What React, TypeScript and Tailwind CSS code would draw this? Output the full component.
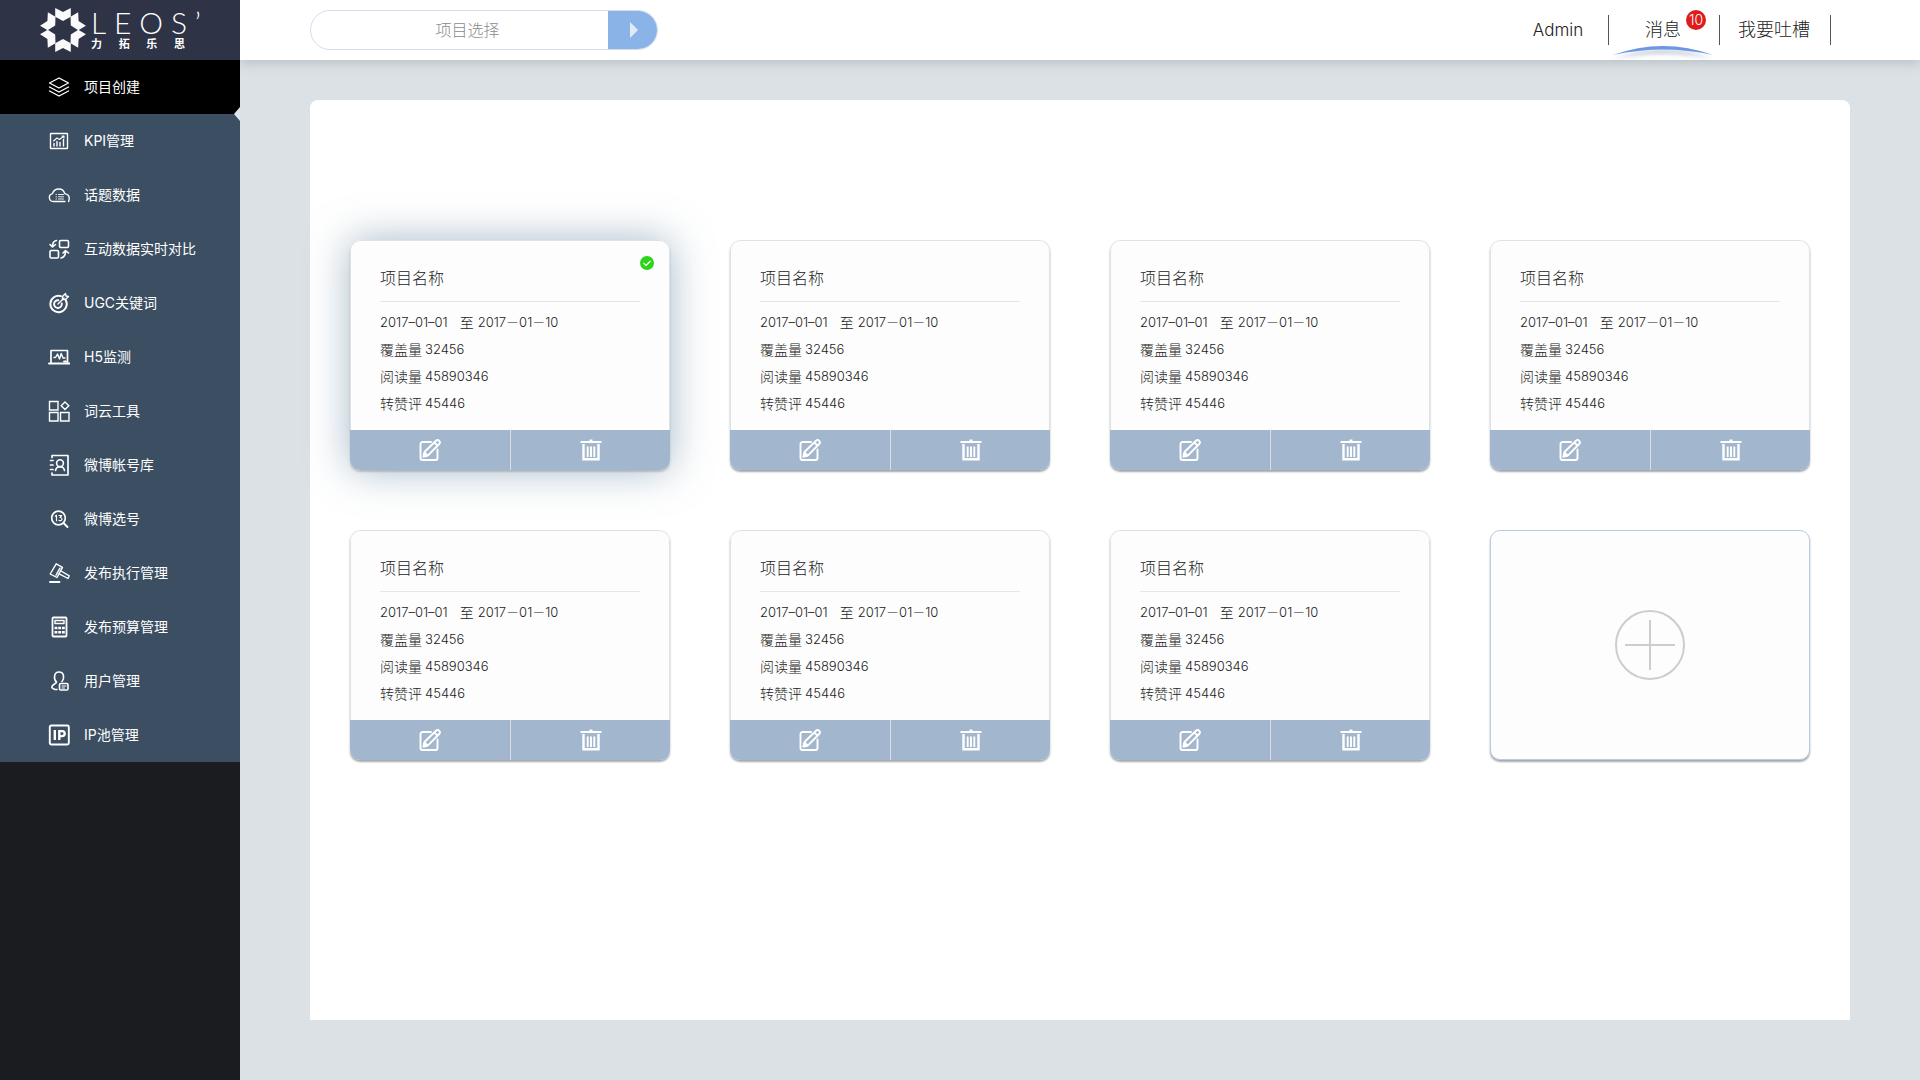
import { useState, type ReactNode } from "react";

const stroke = {
  fill: "none",
  stroke: "currentColor",
  strokeWidth: 1.4,
  strokeLinecap: "round",
  strokeLinejoin: "round",
} as const;

function Icon({ children }: { children: ReactNode }) {
  return (
    <svg viewBox="0 0 22 22" className="size-[22px] shrink-0" {...stroke} aria-hidden="true">
      {children}
    </svg>
  );
}

const icons = {
  layers: (
    <Icon>
      <path d="M11 2 20.5 7 11 12 1.500 7Z" />
      <path d="M1.500 11 11 16l9.500-5" />
      <path d="M1.500 15 11 20l9.500-5" />
    </Icon>
  ),
  kpi: (
    <Icon>
      <rect x="2.500" y="3.500" width="17" height="15" rx="0.500" />
      <path d="M6 16v-2.500M9 16v-4.500M12 16v-3.500M15.500 16V9.500" />
      <path d="m5.500 11 3.500-3 2.500 1.500L16 6M14 6h2v2" strokeWidth="1.100" />
    </Icon>
  ),
  cloud: (
    <Icon>
      <path d="M17 17.500H5.500A4 4 0 0 1 4.500 9.600C5.500 6.500 8 5 10.800 5c3 0 5.200 1.800 5.900 4.600 2.500.4 4.500 2.300 4.500 4.700 0 1.200-.2 2.300-.6 3.200" />
      <path d="M8 10.500h.5M10.500 10.500h5M8 12.800h.5M10.500 12.800h5M8 15h.5M10.500 15h5" strokeWidth="0.900" />
    </Icon>
  ),
  swap: (
    <Icon>
      <rect x="11.500" y="2.500" width="9" height="7" rx="1.200" strokeWidth="1.600" />
      <rect x="2" y="12.500" width="8.500" height="7.500" rx="1.200" strokeWidth="1.600" />
      <path strokeWidth="1.600" d="M8.500 2.500C5.500 3 4.500 5 4.500 8.500M2 6.500 4.500 9 7.500 6.500" />
      <path strokeWidth="1.600" d="M13 20c3-.500 4.500-3 4.500-7M15 15l2.500-2.500 3 2.500" />
    </Icon>
  ),
  target: (
    <Icon>
      <g strokeWidth="1.900">
        <path d="M17.800 8.200A8.200 8.200 0 1 1 13 4.200" />
        <path d="M13.800 11.500A3.900 3.900 0 1 1 10.300 8.200" />
      </g>
      <path d="m10 12 6-6M14.500 7.500V4.500L17.500 1.500 18 4l2.500.500-3 3Z" />
    </Icon>
  ),
  monitor: (
    <Icon>
      <path d="M3 16.500V4.500h16.500V16.500" strokeWidth="1.700" />
      <path d="M1 17.500h20.500" strokeWidth="2" />
      <path d="M6 11.500h1.500L9.500 8l2 5 1.700-5.500 1.800 4.500h2" />
      <path d="M16 15.500h2" strokeWidth="1.800" />
    </Icon>
  ),
  blocks: (
    <Icon>
      <path strokeLinejoin="miter" d="M1.500 1.500h8.500v8.500H1.500ZM1.500 12.500h8.500V21H1.500ZM12.500 12.500H21V21h-8.500ZM17 2l3.800 3.800L17 9.600l-3.800-3.800Z" />
    </Icon>
  ),
  contacts: (
    <Icon>
      <path strokeWidth="1.700" d="M4 3.500V1.500h16v19.500H4v-2M2.500 6.500H5M2.500 11H5M2.500 15.500H5" />
      <circle cx="12" cy="9.200" r="3.400" strokeWidth="1.600" />
      <path strokeWidth="1.600" d="M7.500 16.500c.5-2.500 2-3.800 4.500-3.800s4 1.300 4.500 3.800" />
    </Icon>
  ),
  search13: (
    <Icon>
      <circle cx="10.500" cy="10" r="6.800" strokeWidth="1.700" />
      <path d="m15.500 15 4 4" strokeWidth="2" />
      <path d="M7.300 8.200 8.500 7.300v5.400M11 7.500h2.700L12 9.500c1.300 0 2 .6 2 1.600 0 1.200-1.500 2-3 1.300" strokeWidth="1.200" />
    </Icon>
  ),
  gavel: (
    <Icon>
      <path d="M8.200 1.800 14.500 5.300 9 15.500 2.200 12Z" />
      <path d="m12 6.200-4 7" />
      <path d="m13 9 8.300 4.800-1.300 2.700-8.800-4.600" />
      <path d="M2 20h9.500" strokeWidth="1.900" />
    </Icon>
  ),
  calculator: (
    <Icon>
      <rect x="4.500" y="1.500" width="14" height="19" rx="1" strokeWidth="1.800" />
      <path d="M7 4.500h9v3H7Z" />
      <path strokeWidth="2.600" strokeLinecap="butt" d="M6.500 12h2.900M10.200 12h2.900M13.900 12h2.900M6.500 16.200h2.900M10.200 16.200h2.900M13.900 16.200h2.900" />
    </Icon>
  ),
  user: (
    <Icon>
      <path strokeWidth="1.600" d="M8.500 12.200C5.500 9.500 5.500 2 11 2s5.500 6.500 3 9.500M8.500 12.200c0 1.500-4.700 1.800-4.700 5C4.500 19 6.500 19.500 9 19.500" />
      <rect x="11.500" y="13.500" width="8.500" height="6.500" rx="1.300" strokeWidth="1.600" />
      <path strokeWidth="1.100" d="M14 16h4M14 18h2.500" />
    </Icon>
  ),
  ip: (
    <Icon>
      <rect x="1.800" y="1.500" width="19" height="19" rx="1.500" strokeWidth="1.900" />
      <path d="M6.800 6v10M11.300 16V7.100h2.900a2.400 2.400 0 0 1 0 5h-2.900" strokeWidth="2.400" strokeLinecap="butt" strokeLinejoin="miter" />
    </Icon>
  ),
};

const menu: { label: string; icon: ReactNode }[] = [
  { label: "项目创建", icon: icons.layers },
  { label: "KPI管理", icon: icons.kpi },
  { label: "话题数据", icon: icons.cloud },
  { label: "互动数据实时对比", icon: icons.swap },
  { label: "UGC关键词", icon: icons.target },
  { label: "H5监测", icon: icons.monitor },
  { label: "词云工具", icon: icons.blocks },
  { label: "微博帐号库", icon: icons.contacts },
  { label: "微博选号", icon: icons.search13 },
  { label: "发布执行管理", icon: icons.gavel },
  { label: "发布预算管理", icon: icons.calculator },
  { label: "用户管理", icon: icons.user },
  { label: "IP池管理", icon: icons.ip },
];

function Logo() {
  return (
    <div className="flex h-[60px] items-center gap-[5px] bg-[#2e3346] pl-10 text-white">
      <svg viewBox="0 0 46 46" className="size-[46px] shrink-0" fill="#fafafa" aria-hidden="true">
        {[0, 60, 120, 180, 240, 300].map((angle) => (
          <path key={angle} transform={`rotate(${angle} 23 23)`} d="M15.200 1 23 5 30.800 1V9.800L23 14 15.200 9.800Z" />
        ))}
      </svg>
      <div className="flex w-[110px] flex-col">
        <div className="flex justify-between font-['Lato'] text-[30px] leading-6 font-light">
          <span>L</span>
          <span>E</span>
          <span>O</span>
          <span>S</span>
          <span>’</span>
        </div>
        <div className="mt-1 flex w-[94px] justify-between text-[11px] leading-3 font-bold">
          <span>力</span>
          <span>拓</span>
          <span>乐</span>
          <span>思</span>
        </div>
      </div>
    </div>
  );
}

function Sidebar() {
  return (
    <aside className="relative z-20 w-60 shrink-0 bg-[#1b1c20]">
      <Logo />
      <nav className="bg-[#3b4e62]">
        {menu.map(({ label, icon }, i) => (
          <a
            key={label}
            href="#"
            aria-current={i === 0 ? "page" : undefined}
            className="relative flex h-[54px] items-center gap-3.5 pl-12 text-sm text-white aria-[current=page]:bg-black"
          >
            {icon}
            {label}
            {i === 0 && (
              <svg viewBox="0 0 6 14" className="absolute right-0 -bottom-[7px] z-10 h-3.5 w-1.5" fill="#dfe6ed" aria-hidden="true">
                <path d="M6 0v14L0 7Z" />
              </svg>
            )}
          </a>
        ))}
      </nav>
    </aside>
  );
}

function TopBar() {
  return (
    <header className="relative z-10 flex h-[60px] items-center justify-between bg-white pr-[89px] pl-[70px] shadow-[0_4px_10px_rgba(90,110,120,0.25)]">
      <form className="flex h-10 w-[348px] overflow-hidden rounded-full border border-[#d5dcec]" onSubmit={(e) => e.preventDefault()}>
        <input
          aria-label="项目选择"
          placeholder="项目选择"
          className="min-w-0 flex-1 pl-4 text-center text-base font-light outline-none placeholder:text-[#8a8a8a]"
        />
        <button type="submit" aria-label="选择" className="flex w-[49px] items-center justify-center bg-[#8ab4e8] pl-0.5">
          <svg viewBox="0 0 8 16" className="h-4 w-2" fill="#e3ebf1" aria-hidden="true">
            <path d="M0 0 8 8 0 16Z" />
          </svg>
        </button>
      </form>
      <nav className="flex h-[30px] text-lg font-light text-[#222]">
        <a href="#" className="flex w-[101px] items-center justify-center border-r border-[#555] text-[17px]">
          Admin
        </a>
        <a href="#" className="relative flex w-[111px] items-center justify-center border-r border-[#555] pr-0.5">
          消息
          <span className="absolute -top-[5px] right-[13px] flex size-5 items-center justify-center rounded-full bg-[#e01b1b] text-sm text-white">10</span>
          <svg viewBox="0 0 100 14" className="absolute top-[31px] left-1 h-3.5 w-[100px] drop-shadow-[0_4px_2px_rgba(80,100,140,0.4)]" fill="#6a98e4" aria-hidden="true">
            <path d="M0 9Q50-9 100 9 50-2 0 9Z" />
          </svg>
        </a>
        <a href="#" className="flex w-[111px] items-center justify-center border-r border-[#555] pr-0.5">
          我要吐槽
        </a>
      </nav>
    </header>
  );
}

type Project = {
  name: string;
  start: string;
  end: string;
  stats: [string, string][];
};

const project: Project = {
  name: "项目名称",
  start: "2017–01–01",
  end: "2017－01－10",
  stats: [
    ["覆盖量", "32456"],
    ["阅读量", "45890346"],
    ["转赞评", "45446"],
  ],
};

function EditIcon() {
  return (
    <svg viewBox="0 0 22 22" className="size-[22px]" {...stroke} strokeWidth={1.900} aria-hidden="true">
      <path d="M12 3H3.500A2 2 0 0 0 1.500 5v14A2 2 0 0 0 3.500 21h13a2 2 0 0 0 2-2v-8.500" />
      <path d="m4.500 17.500 1.200-4.800L17 1.800a2.200 2.200 0 0 1 3.200 3.200L9 16.300ZM15.300 3.500l3.200 3.200" />
      <path d="m4.500 17.500 1-4 3 3Z" fill="currentColor" />
    </svg>
  );
}

function TrashIcon() {
  return (
    <svg viewBox="0 0 22 22" className="size-[22px]" {...stroke} strokeLinecap="butt" strokeLinejoin="miter" strokeWidth={2.400} aria-hidden="true">
      <path d="M.5 3h21M9.500 1.500h3" strokeWidth="2.200" />
      <path d="M3.500 5v15.300h15V5" />
      <path d="M7.700 7.500V18M11 7.500V18M14.300 7.500V18" strokeWidth="1.900" />
    </svg>
  );
}

function ProjectCard({ data, selected, onSelect }: { data: Project; selected: boolean; onSelect: () => void }) {
  return (
    <article
      onClick={onSelect}
      data-selected={selected}
      className="relative overflow-hidden rounded-[10px] bg-[#fdfdfd] shadow-[0_2px_2px_rgba(100,110,120,0.6)] data-[selected=true]:shadow-[0_2px_2px_rgba(100,110,120,0.35),0_0_40px_rgba(75,115,145,0.5)]"
    >
      <div className="rounded-t-[10px] border border-b-0 border-[#dce2e6] px-[29px] pt-[25px] pb-[13px]">
        <h2 className="border-b border-[#e6e6e6] pb-[11px] text-base leading-6 font-light text-[#222]">{data.name}</h2>
        <div className="mt-[7px] text-sm leading-[27px] font-light text-[#222]">
          <p className="flex">
            <time className="text-[13px]">{data.start}</time>
            <span className="pr-1 pl-3">至</span>
            <time className="text-[13px]">{data.end}</time>
          </p>
          <dl>
            {data.stats.map(([label, value]) => (
              <div key={label} className="flex gap-[3px]">
                <dt>{label}</dt>
                <dd className="text-[13px]">{value}</dd>
              </div>
            ))}
          </dl>
        </div>
      </div>
      {selected && (
        <svg viewBox="0 0 14 14" className="absolute top-4 right-4 size-3.5" role="img" aria-label="已选择">
          <circle cx="7" cy="7" r="7" fill="#2ed41a" />
          <path d="m3.500 7 2.500 2.500 4.500-4.500" fill="none" stroke="#fff" strokeWidth="1.200" />
        </svg>
      )}
      <div className="grid h-10 grid-cols-2 bg-[#a2b6cd] text-white">
        <button type="button" aria-label="编辑" className="flex items-center justify-center">
          <EditIcon />
        </button>
        <button type="button" aria-label="删除" className="flex items-center justify-center border-l border-[#dcdfe2]">
          <TrashIcon />
        </button>
      </div>
    </article>
  );
}

export default function App() {
  const [selected, setSelected] = useState(0);
  return (
    <div className="flex min-h-screen bg-[#dce1e5] font-['Inter','Noto_Sans_CJK_SC',sans-serif]">
      <Sidebar />
      <div className="flex min-w-0 flex-1 flex-col">
        <TopBar />
        <main className="mx-[70px] mt-10 mb-[60px] flex-1 rounded-t-lg bg-white px-10 pt-[140px] pb-10">
          <div className="grid grid-cols-4 gap-[60px]">
            {Array.from({ length: 7 }, (_, i) => (
              <ProjectCard key={i} data={project} selected={i === selected} onSelect={() => setSelected(i)} />
            ))}
            <button
              type="button"
              aria-label="新建项目"
              className="flex items-center justify-center rounded-[10px] border border-[#bccbe2] bg-[#fdfdfd] shadow-[0_2px_2px_rgba(100,110,120,0.6)]"
            >
              <svg viewBox="0 0 70 70" className="size-[70px]" fill="none" stroke="#cdcdcd" strokeWidth="2" aria-hidden="true">
                <circle cx="35" cy="35" r="34" />
                <path d="M35 10v50M10 35h50" />
              </svg>
            </button>
          </div>
        </main>
      </div>
    </div>
  );
}
